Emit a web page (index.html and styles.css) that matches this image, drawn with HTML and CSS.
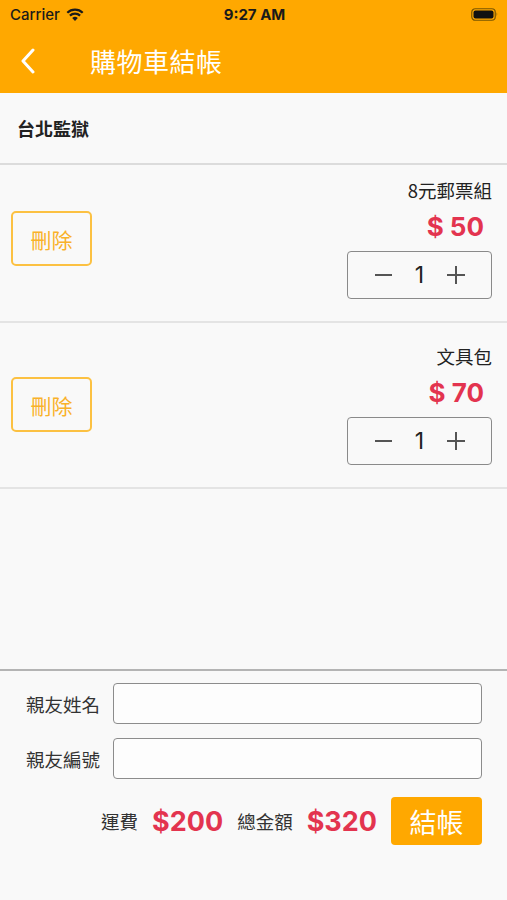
FILE: index.html
```html
<!DOCTYPE html>
<html>

<head>
    <title>購物車結帳</title>
    <meta charset="utf-8" />
    <link rel="stylesheet" href="styles.css">
</head>

<body>
    <div class="page">
        <div class="header">
            <div class="status">
                <div class="status-left">
                    <span>Carrier</span>
                    <svg class="wifi" width="18" height="13" viewBox="0 0 18 13">
                        <path d="M9 13 L6.2 9.9 A4.2 4.2 0 0 1 11.8 9.9 Z" fill="#1a1a1a" />
                        <path d="M3.9 7.6 A7.4 7.4 0 0 1 14.1 7.6" stroke="#1a1a1a" stroke-width="2.2" fill="none" />
                        <path d="M1.3 4.8 A11 11 0 0 1 16.7 4.8" stroke="#1a1a1a" stroke-width="2.2" fill="none" />
                    </svg>
                </div>
                <div class="status-time">9:27 AM</div>
                <div class="status-right">
                    <svg width="28" height="13" viewBox="0 0 28 13">
                        <rect x="0.75" y="0.75" width="23.5" height="11.5" rx="3.5" fill="none" stroke="#7a5600" stroke-width="1.2" />
                        <rect x="2.5" y="2.5" width="20" height="8" rx="2" fill="#111" />
                        <path d="M25.6 4.3 Q27.2 6.5 25.6 8.7 Z" fill="#7a5600" />
                    </svg>
                </div>
            </div>
            <div class="nav">
                <svg class="back" width="16" height="26" viewBox="0 0 16 26">
                    <polyline points="13,2 3,13 13,24" fill="none" stroke="#fff" stroke-width="3" stroke-linecap="round" stroke-linejoin="round" />
                </svg>
                <div class="nav-title">購物車結帳</div>
            </div>
        </div>

        <div class="section">台北監獄</div>

        <div class="item item-first">
            <button class="del-btn">刪除</button>
            <div class="item-info">
                <div class="item-name">8元郵票組</div>
                <div class="item-price">$ 50</div>
                <div class="stepper">
                    <svg width="20" height="20" viewBox="0 0 20 20"><line x1="1" y1="10" x2="18" y2="10" stroke="#555" stroke-width="2" /></svg>
                    <span class="qty">1</span>
                    <svg width="20" height="20" viewBox="0 0 20 20"><line x1="1" y1="10" x2="19" y2="10" stroke="#555" stroke-width="2" /><line x1="10" y1="1" x2="10" y2="19" stroke="#555" stroke-width="2" /></svg>
                </div>
            </div>
        </div>

        <div class="item">
            <button class="del-btn">刪除</button>
            <div class="item-info">
                <div class="item-name">文具包</div>
                <div class="item-price">$ 70</div>
                <div class="stepper">
                    <svg width="20" height="20" viewBox="0 0 20 20"><line x1="1" y1="10" x2="18" y2="10" stroke="#555" stroke-width="2" /></svg>
                    <span class="qty">1</span>
                    <svg width="20" height="20" viewBox="0 0 20 20"><line x1="1" y1="10" x2="19" y2="10" stroke="#555" stroke-width="2" /><line x1="10" y1="1" x2="10" y2="19" stroke="#555" stroke-width="2" /></svg>
                </div>
            </div>
        </div>

        <div class="footer">
            <div class="form-row">
                <label class="form-label">親友姓名</label>
                <input class="form-input" type="text">
            </div>
            <div class="form-row">
                <label class="form-label">親友編號</label>
                <input class="form-input" type="text">
            </div>
            <div class="total-row">
                <span class="total-label">運費</span>
                <span class="total-value">$200</span>
                <span class="total-label">總金額</span>
                <span class="total-value">$320</span>
                <button class="checkout">結帳</button>
            </div>
        </div>
    </div>
</body>

</html>
```

FILE: styles.css
```css
* {
    box-sizing: border-box;
}

body {
    margin: 0;
    background-color: #f9f9f9;
    font-family: "Noto Sans CJK TC", "Noto Sans", sans-serif;
    color: #222;
}

.page {
    display: flex;
    flex-direction: column;
    min-height: 100vh;
}

.header {
    background-color: #ffa800;
    height: 93px;
}

.status {
    height: 28px;
    display: flex;
    align-items: center;
    justify-content: space-between;
    padding: 0 8px 0 10px;
    font-family: Inter, "Liberation Sans", sans-serif;
    font-size: 15px;
    color: #1a1a1a;
}

.status-left {
    flex: 1;
    display: flex;
    align-items: center;
    gap: 6px;
    font-weight: 500;
}

.status-time {
    font-weight: 700;
}

.status-right {
    flex: 1;
    display: flex;
    justify-content: flex-end;
    padding-top: 1px;
}

.nav {
    height: 65px;
    display: flex;
    align-items: center;
    padding-left: 20px;
}

.back {
    display: block;
}

.nav-title {
    margin-left: 54px;
    font-size: 26px;
    color: #fff;
    font-weight: 400;
    letter-spacing: 0.5px;
}

.section {
    height: 72px;
    padding-left: 17px;
    display: flex;
    align-items: center;
    font-size: 18px;
    font-weight: 700;
    color: #222;
    border-bottom: 2px solid #dcdcdc;
}

.item {
    display: flex;
    align-items: center;
    justify-content: space-between;
    padding: 21px 15px 22px 11px;
    border-bottom: 2px solid #e4e4e4;
}

.item-first {
    padding-top: 13px;
}

.del-btn {
    width: 81px;
    height: 55px;
    border: 2px solid #fcc142;
    border-radius: 5px;
    background: transparent;
    color: #f9b22a;
    font-family: "Noto Sans CJK TC", sans-serif;
    font-size: 21px;
    padding: 0;
}

.item-info {
    display: flex;
    flex-direction: column;
    align-items: flex-end;
}

.item-name {
    height: 24px;
    line-height: 24px;
    font-size: 18.5px;
    color: #222;
}

.item-price {
    margin-top: 10px;
    height: 30px;
    line-height: 30px;
    padding-right: 8px;
    font-family: Inter, "Liberation Sans", sans-serif;
    font-size: 26px;
    font-weight: 700;
    color: #e3344f;
}

.stepper {
    margin-top: 9px;
    width: 145px;
    height: 48px;
    border: 1.5px solid #8a8a8a;
    border-radius: 4px;
    display: flex;
    align-items: center;
    justify-content: center;
    gap: 16px;
}

.stepper svg {
    display: block;
}

.qty {
    width: 20px;
    text-align: center;
    font-family: Inter, "Liberation Sans", sans-serif;
    font-size: 23px;
    color: #222;
}

.footer {
    margin-top: auto;
    border-top: 2px solid #b4b4b4;
    padding: 12px 25px 55px 26px;
    display: flex;
    flex-direction: column;
    gap: 14px;
}

.form-row {
    display: flex;
    align-items: center;
    gap: 13px;
}

.form-label {
    width: 74px;
    font-size: 18.5px;
    color: #333;
    white-space: nowrap;
}

.form-input {
    flex: 1;
    height: 41px;
    border: 1.5px solid #8c8c8c;
    border-radius: 4px;
    background-color: #fdfdfd;
}

.total-row {
    margin-top: 4px;
    display: flex;
    align-items: center;
    justify-content: flex-end;
    gap: 14px;
}

.total-label {
    font-size: 18.5px;
    color: #333;
}

.total-value {
    font-family: Inter, "Liberation Sans", sans-serif;
    font-size: 27px;
    font-weight: 700;
    color: #e3344f;
}

.checkout {
    width: 91px;
    height: 48px;
    border: none;
    border-radius: 4px;
    background-color: #ffa800;
    color: #fff;
    font-family: "Noto Sans CJK TC", sans-serif;
    font-size: 27px;
    padding: 0;
}
```
